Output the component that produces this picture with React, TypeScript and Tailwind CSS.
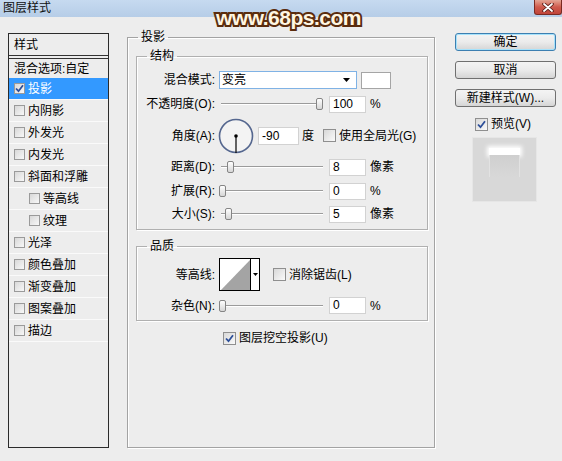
import type { ReactNode } from "react"

function Box({ checked = false, small = false }: { checked?: boolean; small?: boolean }) {
    return (
        <span
            className={
                small
                    ? "flex h-[11px] w-[11px] shrink-0 items-center justify-center border border-[#9a9a9a] bg-gradient-to-br from-[#d8d8d8] to-[#f8f8f8]"
                    : "flex h-[13px] w-[13px] shrink-0 items-center justify-center border border-[#8f8f8f] bg-gradient-to-br from-[#d8d8d8] to-[#fafafa]"
            }
        >
            {checked && (
                <svg width="9" height="9" viewBox="0 0 9 9">
                    <path d="M1 4.5 L3.5 7.2 L8 1.2" fill="none" stroke="#2d4f99" strokeWidth="1.8" />
                </svg>
            )}
        </span>
    )
}

function Slider({ pos }: { pos: number }) {
    return (
        <div className="relative ml-[4px] h-[14px] w-[104px] shrink-0">
            <div className="absolute left-[2px] right-0 top-[6px] h-[2px] border-t border-b border-t-[#9b9b9b] border-b-white" />
            <div
                className="absolute top-[1px] h-[12px] w-[7px] rounded-[2px] border border-[#858585] bg-gradient-to-b from-white to-[#d6d6d6]"
                style={{ left: pos }}
            />
        </div>
    )
}

function Field({ value }: { value: string }) {
    return (
        <div className="ml-[6px] h-[17px] w-[37px] shrink-0 border border-[#d2d2d2] bg-white pl-[3px] leading-[15px]">
            {value}
        </div>
    )
}

function Row({ label, className, children }: { label: string; className: string; children: ReactNode }) {
    return (
        <div className={`flex items-center ${className}`}>
            <span className="w-[78px] shrink-0 text-right">{label}</span>
            {children}
        </div>
    )
}

function Button({ label, primary = false, className }: { label: string; primary?: boolean; className: string }) {
    return (
        <div
            className={`flex h-[18px] w-[101px] items-center justify-center rounded-[3px] border bg-gradient-to-b from-[#f4f4f4] via-[#ebebeb] to-[#d5d5d5] ${
                primary ? "border-[#3c7fb1] shadow-[inset_0_0_0_1px_#a6e2fb]" : "border-[#707070]"
            } ${className}`}
        >
            {label}
        </div>
    )
}

const styles = [
    { name: "投影", checked: true, active: true },
    { name: "内阴影" },
    { name: "外发光" },
    { name: "内发光" },
    { name: "斜面和浮雕" },
    { name: "等高线", indent: true },
    { name: "纹理", indent: true },
    { name: "光泽" },
    { name: "颜色叠加" },
    { name: "渐变叠加" },
    { name: "图案叠加" },
    { name: "描边" },
]

export default function App() {
    return (
        <div className="relative flex h-[461px] w-[562px] flex-col overflow-hidden bg-[#ededed] font-['Liberation_Sans','Noto_Sans_CJK_SC',sans-serif] text-[12px] leading-[14px] text-black">
            {/* title bar */}
            <div className="flex h-[17px] shrink-0 items-start justify-between bg-gradient-to-b from-[#c6daf0] to-[#b6cde7]">
                <span className="ml-[3px] mt-[1px] text-[#111]">图层样式</span>
                <div className="flex h-[15px] w-[28px] items-center justify-center rounded-b-[3px] border border-t-0 border-[#7a2a22] bg-gradient-to-b from-[#e3a595] via-[#cf5a4c] to-[#c0443a]">
                    <svg width="12" height="9" viewBox="0 0 12 9">
                        <path d="M2 1 L10 8 M10 1 L2 8" stroke="#5a1e18" strokeWidth="3.6" strokeLinecap="round" />
                        <path d="M2 1 L10 8 M10 1 L2 8" stroke="#fff" strokeWidth="1.8" strokeLinecap="round" />
                    </svg>
                </div>
            </div>

            <div className="flex items-start">
                {/* styles list */}
                <div className="ml-[8px] mt-[16px] flex h-[415px] w-[101px] shrink-0 flex-col border border-[#2b2b2b]">
                    <div className="flex h-[22px] items-center border-b border-[#333] pl-[5px]">样式</div>
                    <div className="h-[2px]" />
                    <div className="flex h-[20px] items-center border-t border-[#333] pl-[5px]">混合选项:自定</div>
                    {styles.map((s) => (
                        <div
                            key={s.name}
                            className={`flex h-[22px] items-center border-b border-[#fafafa] ${
                                s.active ? "bg-[#3399ff] text-white" : ""
                            } ${s.indent ? "pl-[20px]" : "pl-[5px]"}`}
                        >
                            <Box small checked={s.checked} />
                            <span className="ml-[3px]">{s.name}</span>
                        </div>
                    ))}
                </div>

                {/* drop shadow */}
                <fieldset className="ml-[18px] mt-[13px] h-[418px] w-[308px] shrink-0 border border-[#a3a3a3] shadow-[1px_1px_0_#fff,inset_1px_1px_0_#fff]">
                    <legend className="ml-[10px] px-[3px] leading-[14px]">投影</legend>

                    <fieldset className="ml-[8px] mt-[5px] w-[292px] border border-[#b0b0b0] shadow-[1px_1px_0_#fff,inset_1px_1px_0_#fff]">
                        <legend className="ml-[10px] px-[3px] leading-[14px]">结构</legend>

                        <Row label="混合模式:" className="mt-[8px] h-[18px]">
                            <div className="ml-[4px] flex h-[18px] w-[138px] items-center justify-between border border-[#7fb2e5] bg-white pl-[2px] pr-[6px]">
                                <span>变亮</span>
                                <svg width="7" height="4" viewBox="0 0 7 4">
                                    <path d="M0 0 H7 L3.5 4 Z" fill="#000" />
                                </svg>
                            </div>
                            <div className="ml-[4px] h-[17px] w-[30px] border border-[#a5a5a5] bg-white" />
                        </Row>

                        <Row label="不透明度(O):" className="mt-[6px] h-[18px]">
                            <Slider pos={97} />
                            <Field value="100" />
                            <span className="ml-[4px]">%</span>
                        </Row>

                        <Row label="角度(A):" className="mt-[5px] h-[35px]">
                            <svg className="ml-[3px] shrink-0" width="36" height="36" viewBox="0 0 36 36">
                                <circle cx="18" cy="18" r="16.5" fill="#f3f3f3" stroke="#55678f" strokeWidth="1.6" />
                                <line x1="18" y1="18" x2="18" y2="35" stroke="#000" strokeWidth="1.2" />
                                <circle cx="18" cy="18" r="1.8" fill="#000" />
                            </svg>
                            <div className="ml-[4px] h-[18px] w-[41px] shrink-0 border border-[#d2d2d2] bg-white pl-[3px] leading-[16px]">
                                -90
                            </div>
                            <span className="ml-[3px]">度</span>
                            <span className="ml-[9px]">
                                <Box />
                            </span>
                            <span className="ml-[3px]">使用全局光(G)</span>
                        </Row>

                        <Row label="距离(D):" className="mt-[5px] h-[18px]">
                            <Slider pos={8} />
                            <Field value="8" />
                            <span className="ml-[4px]">像素</span>
                        </Row>

                        <Row label="扩展(R):" className="mt-[6px] h-[18px]">
                            <Slider pos={0} />
                            <Field value="0" />
                            <span className="ml-[4px]">%</span>
                        </Row>

                        <Row label="大小(S):" className="mb-[6px] mt-[5px] h-[18px]">
                            <Slider pos={6} />
                            <Field value="5" />
                            <span className="ml-[4px]">像素</span>
                        </Row>
                    </fieldset>

                    <fieldset className="ml-[8px] mt-[9px] w-[292px] border border-[#b0b0b0] shadow-[1px_1px_0_#fff,inset_1px_1px_0_#fff]">
                        <legend className="ml-[10px] px-[3px] leading-[14px]">品质</legend>

                        <Row label="等高线:" className="mt-[5px] h-[33px]">
                            <div className="ml-[4px] flex h-[33px] w-[41px] shrink-0 border border-black bg-white">
                                <svg width="30" height="31" viewBox="0 0 30 31">
                                    <rect x="0" y="0" width="30" height="31" fill="#fff" />
                                    <path d="M1 31 L30 1 L30 31 Z" fill="#a4a4a4" />
                                </svg>
                                <div className="flex flex-1 items-center justify-center border-l border-black">
                                    <svg width="5" height="3" viewBox="0 0 5 3">
                                        <path d="M0 0 H5 L2.5 3 Z" fill="#000" />
                                    </svg>
                                </div>
                            </div>
                            <span className="ml-[13px]">
                                <Box />
                            </span>
                            <span className="ml-[3px]">消除锯齿(L)</span>
                        </Row>

                        <Row label="杂色(N):" className="mb-[6px] mt-[6px] h-[17px]">
                            <Slider pos={0} />
                            <Field value="0" />
                            <span className="ml-[4px]">%</span>
                        </Row>
                    </fieldset>

                    <div className="ml-[95px] mt-[10px] flex h-[14px] items-center">
                        <Box checked />
                        <span className="ml-[3px]">图层挖空投影(U)</span>
                    </div>
                </fieldset>

                {/* buttons */}
                <div className="ml-[20px] mt-[16px] flex w-[101px] shrink-0 flex-col">
                    <Button label="确定" primary className="" />
                    <Button label="取消" className="mt-[10px]" />
                    <Button label="新建样式(W)..." className="mt-[10px]" />
                    <div className="ml-[20px] mt-[10px] flex h-[14px] items-center">
                        <Box checked />
                        <span className="ml-[3px]">预览(V)</span>
                    </div>
                    <div className="ml-[17px] mt-[6px] flex h-[65px] w-[65px] flex-col items-center border border-[#e6e6e6] bg-[#d8d8d8]">
                        <div className="mt-[10px] h-[7px] w-[31px] bg-white shadow-[0_0_4px_2px_#fff]" />
                        <div className="h-[22px] w-[31px] border-x border-[#e2e2e2] bg-gradient-to-b from-[#cfcfcf] to-[#d8d8d8]" />
                    </div>
                </div>
            </div>

            {/* watermark */}
            <div className="pointer-events-none absolute left-[216px] top-[6px] text-[21px] font-bold leading-[24px] tracking-[-0.5px] text-[#fff6e2] [-webkit-text-stroke:4px_#5a2c0d] [paint-order:stroke_fill]">
                www.68ps.com
            </div>
        </div>
    )
}
